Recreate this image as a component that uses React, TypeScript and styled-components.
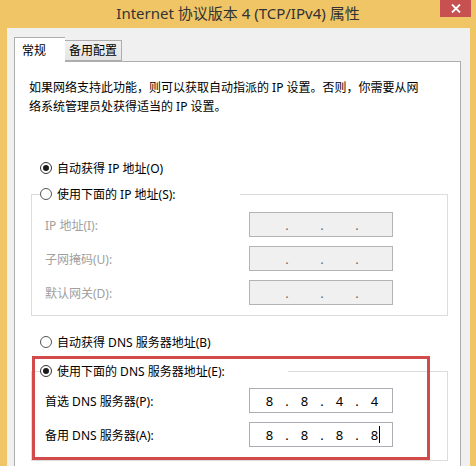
import React from "react";
import styled, { createGlobalStyle } from "styled-components";

const GlobalStyle = createGlobalStyle`
  html, body { margin: 0; padding: 0; }
  body {
    font-family: "Noto Sans", "Noto Sans CJK SC", sans-serif;
    font-size: 12px;
    color: #000;
  }
`;

const Window = styled.div`
  width: 476px;
  height: 466px;
  overflow: hidden;
  background: #f0c566;
  display: flex;
  flex-direction: column;
`;

const TitleBar = styled.div`
  height: 28px;
  display: grid;
  grid-template-columns: 1fr auto 1fr;
  align-items: start;
  flex: none;
`;

const Title = styled.div`
  grid-column: 2;
  font-family: "Noto Sans", "Noto Sans CJK SC", sans-serif;
  font-size: 15px;
  line-height: 27px;
  color: #333;
  white-space: nowrap;
`;

const CloseButton = styled.div`
  grid-column: 3;
  justify-self: end;
  width: 31px;
  height: 17px;
  margin-right: 5px;
  background: #c75050;
  display: flex;
  align-items: center;
  justify-content: center;
`;

const Body = styled.div`
  flex: 1;
  margin: 0 6px 0 7px;
  background: #f0f0f0;
  padding: 9px 9px 0 7px;
  display: flex;
  flex-direction: column;
`;

const TabRow = styled.div`
  display: flex;
  align-items: flex-end;
  position: relative;
  z-index: 1;
  margin-bottom: -1px;
`;

const Tab = styled.div<{ $active?: boolean }>`
  box-sizing: border-box;
  border: 1px solid #adadad;
  border-bottom: ${(p) => (p.$active ? "none" : "1px solid #adadad")};
  ${(p) => (p.$active ? "border-right: none;" : "border-left: none;")}
  background: ${(p) => (p.$active ? "#fff" : "linear-gradient(#f0f0f0, #e5e5e5)")};
  height: ${(p) => (p.$active ? "25px" : "21px")};
  width: ${(p) => (p.$active ? "51px" : "57px")};
  padding-left: ${(p) => (p.$active ? "7px" : "4px")};
  margin-bottom: ${(p) => (p.$active ? "0" : "1px")};
  line-height: ${(p) => (p.$active ? "25px" : "19px")};
  font-size: 12px;
  white-space: nowrap;
`;

const Panel = styled.div`
  position: relative;
  flex: 1;
  background: #fff;
  border: 1px solid #adadad;
  padding: 16px 12px 30px 0;
`;

const Intro = styled.p`
  margin: 0 0 0 14px;
  line-height: 19px;
  font-size: 12px;
  width: 400px;
`;

const RadioRow = styled.div<{ $top: number }>`
  display: flex;
  align-items: center;
  height: 16px;
  margin-top: ${(p) => p.$top}px;
  padding-left: 25px;
  gap: 5px;
  white-space: nowrap;
`;

const RadioCircle = styled.span<{ $checked?: boolean }>`
  box-sizing: border-box;
  width: 12px;
  height: 12px;
  border-radius: 50%;
  border: 1px solid ${(p) => (p.$checked ? "#333" : "#555")};
  background: #fff;
  display: flex;
  align-items: center;
  justify-content: center;
  flex: none;
  &::after {
    content: "";
    display: ${(p) => (p.$checked ? "block" : "none")};
    width: 6px;
    height: 6px;
    border-radius: 50%;
    background: #1a1a1a;
  }
`;

const Group = styled.div<{ $top: number }>`
  margin: ${(p) => p.$top}px 0 0 16px;
  width: 417px;
`;

const GroupHeader = styled.div`
  display: flex;
  align-items: center;
  height: 16px;
  &::before,
  &::after {
    content: "";
    align-self: flex-end;
    height: 8px;
    box-sizing: border-box;
    border-top: 1px solid #dcdcdc;
  }
  &::before {
    width: 9px;
    border-left: 1px solid #dcdcdc;
  }
  &::after {
    flex: 1;
    border-right: 1px solid #dcdcdc;
  }
`;

const Legend = styled.div<{ $width: number }>`
  width: ${(p) => p.$width}px;
  display: flex;
  align-items: center;
  gap: 5px;
  white-space: nowrap;
`;

const GroupBody = styled.div<{ $padTop: number; $padBottom: number }>`
  border: 1px solid #dcdcdc;
  border-top: none;
  padding: ${(p) => p.$padTop}px 0 ${(p) => p.$padBottom}px 13px;
  display: grid;
  grid-template-columns: 204px 144px;
  row-gap: 9px;
  align-items: center;
`;

const FieldLabel = styled.div<{ $disabled?: boolean }>`
  color: ${(p) => (p.$disabled ? "#a0a0a0" : "#000")};
  white-space: nowrap;
`;

const AddressField = styled.div<{ $disabled?: boolean }>`
  box-sizing: border-box;
  height: 25px;
  border: 1px solid ${(p) => (p.$disabled ? "#b4b4b4" : "#abadb3")};
  background: ${(p) => (p.$disabled ? "#f0f0f0" : "#fff")};
  display: flex;
  align-items: center;
  padding-left: 5px;
  color: ${(p) => (p.$disabled ? "#6d6d6d" : "#000")};
  font-size: 13px;
`;

const Octet = styled.span`
  width: 29px;
  display: flex;
  justify-content: center;
  align-items: center;
`;

const Dot = styled.span`
  width: 6px;
  text-align: center;
`;

const Caret = styled.span`
  display: inline-block;
  width: 1px;
  height: 17px;
  background: #000;
  margin-left: 1px;
  margin-right: -2px;
`;

const Highlight = styled.div`
  position: absolute;
  left: 17px;
  top: 294px;
  width: 398px;
  height: 104px;
  box-sizing: border-box;
  border: 3px solid #d24a4a;
  pointer-events: none;
`;

type FieldProps = { values?: string[]; disabled?: boolean; caret?: boolean };

const IpField: React.FC<FieldProps> = ({ values = ["", "", "", ""], disabled, caret }) => (
  <AddressField $disabled={disabled}>
    {values.map((v, i) => (
      <React.Fragment key={i}>
        {i > 0 && <Dot>.</Dot>}
        <Octet>
          {v}
          {caret && i === 3 && <Caret />}
        </Octet>
      </React.Fragment>
    ))}
  </AddressField>
);

export default function App() {
  return (
    <>
      <GlobalStyle />
      <Window>
        <TitleBar>
          <Title>Internet 协议版本 4 (TCP/IPv4) 属性</Title>
          <CloseButton>
            <svg width="10" height="9" viewBox="0 0 10 9">
              <path d="M1 0.5 L9 8.5 M9 0.5 L1 8.5" stroke="#fff" strokeWidth="1.8" />
            </svg>
          </CloseButton>
        </TitleBar>
        <Body>
          <TabRow>
            <Tab $active>常规</Tab>
            <Tab>备用配置</Tab>
          </TabRow>
          <Panel>
            <Intro>
              如果网络支持此功能，则可以获取自动指派的 IP 设置。否则，你需要从网络系统管理员处获得适当的 IP 设置。
            </Intro>
            <RadioRow $top={44}>
              <RadioCircle $checked />
              <span>自动获得 IP 地址(O)</span>
            </RadioRow>
            <Group $top={10}>
              <GroupHeader>
                <Legend $width={200}>
                  <RadioCircle />
                  <span>使用下面的 IP 地址(S):</span>
                </Legend>
              </GroupHeader>
              <GroupBody $padTop={10} $padBottom={10}>
                <FieldLabel $disabled>IP 地址(I):</FieldLabel>
                <IpField disabled />
                <FieldLabel $disabled>子网掩码(U):</FieldLabel>
                <IpField disabled />
                <FieldLabel $disabled>默认网关(D):</FieldLabel>
                <IpField disabled />
              </GroupBody>
            </Group>
            <RadioRow $top={18}>
              <RadioCircle />
              <span>自动获得 DNS 服务器地址(B)</span>
            </RadioRow>
            <Group $top={13}>
              <GroupHeader>
                <Legend $width={248}>
                  <RadioCircle $checked />
                  <span>使用下面的 DNS 服务器地址(E):</span>
                </Legend>
              </GroupHeader>
              <GroupBody $padTop={9} $padBottom={13}>
                <FieldLabel>首选 DNS 服务器(P):</FieldLabel>
                <IpField values={["8", "8", "4", "4"]} />
                <FieldLabel>备用 DNS 服务器(A):</FieldLabel>
                <IpField values={["8", "8", "8", "8"]} caret />
              </GroupBody>
            </Group>
            <Highlight />
          </Panel>
        </Body>
      </Window>
    </>
  );
}
